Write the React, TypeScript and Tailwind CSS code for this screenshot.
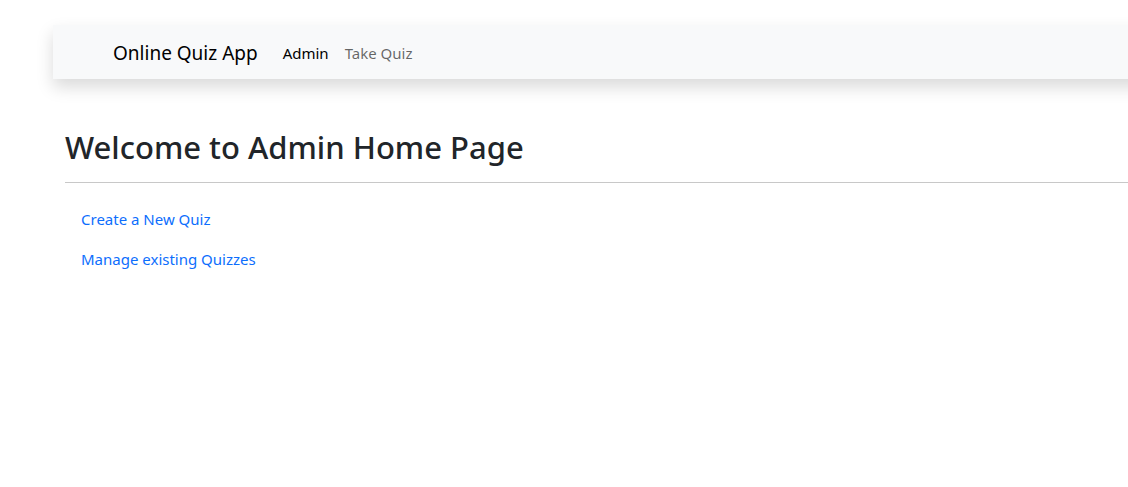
export default function App() {
  return (
    <div className="min-h-screen bg-white overflow-hidden font-['Noto_Sans',sans-serif] text-[#212529]">
      {/* Navbar */}
      <div className="pl-[53px] pt-[25px]">
        <nav className="h-[54px] w-[1200px] bg-[#f8f9fa] shadow-[0_8px_16px_rgba(0,0,0,0.15)] flex items-center pl-[60px]">
          <a className="text-[19px] text-black mr-[25px] pt-[2px]">Online Quiz App</a>
          <ul className="flex items-center gap-4 text-[15px] pt-[2px]">
            <li className="text-black">Admin</li>
            <li className="text-black/60">Take Quiz</li>
          </ul>
        </nav>
      </div>

      {/* Content */}
      <div className="pl-[65px] pt-[50px]">
        <h2 className="text-[31px] font-medium leading-[1.2]">Welcome to Admin Home Page</h2>
        <hr className="mt-[16px] border-0 border-t border-[#c8c8c8]" />
        <div className="pl-4 pt-[25px] flex flex-col gap-[17px] text-[15px] text-[#0d6efd]">
          <a>Create a New Quiz</a>
          <a>Manage existing Quizzes</a>
        </div>
      </div>
    </div>
  );
}
